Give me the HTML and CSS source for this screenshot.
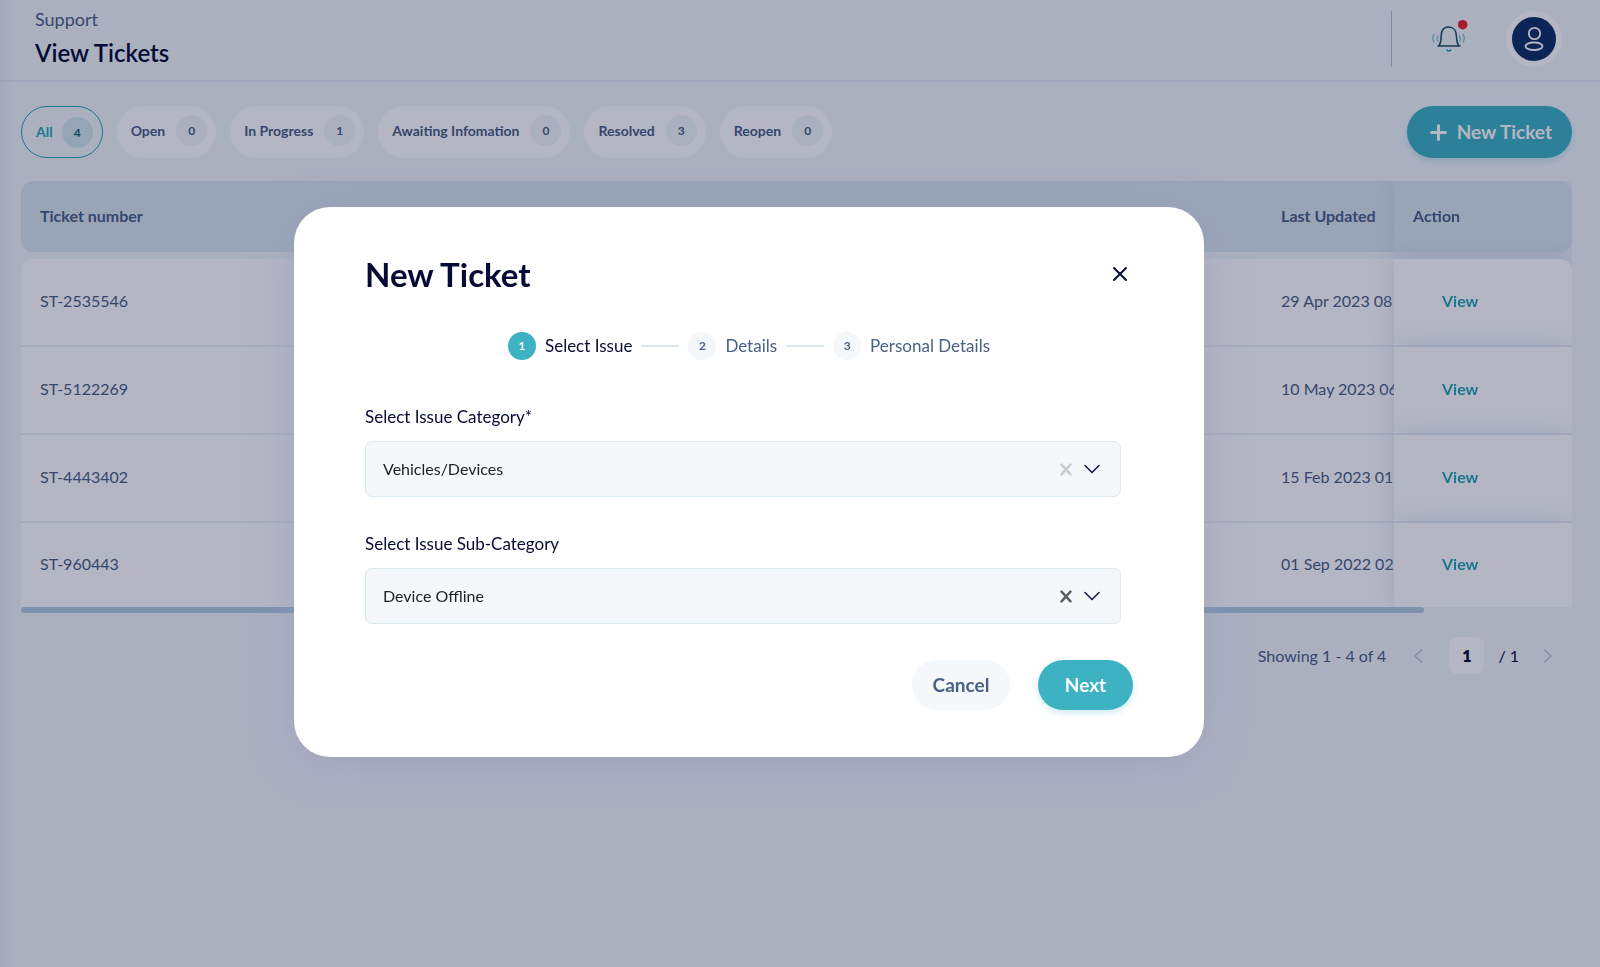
FILE: index.html
```html
<!DOCTYPE html>
<html lang="en">

<head>
  <meta charset="UTF-8" />
  <meta name="viewport" content="width=device-width, initial-scale=1.0" />
  <title>View Tickets</title>
  <link rel="stylesheet" href="styles.css">
</head>

<body>
  <header class="topbar">
    <div class="heading">
      <p class="section">Support</p>
      <h1 class="page-title">View Tickets</h1>
    </div>
    <div class="tools">
      <button class="bell" type="button" aria-label="Notifications">
        <svg width="36" height="34" viewBox="0 0 36 34" fill="none" stroke-linecap="round" stroke-linejoin="round">
          <path d="M8 26h22M9 26c1.500-2.500 2.200-5 2.200-10 0-5.500 2.700-9 7.500-9s7.700 3.500 7.700 9c0 5 .8 7.500 2.300 10" stroke="#1c4f63" stroke-width="1.500" />
          <path d="M17 30c1 1.200 2.800 1.200 3.800 0" stroke="#27a4b7" stroke-width="1.700" />
          <path d="M4 14.500c-1.800 2.500-1.800 5 0 7.500M8 16c-1 1.500-1 3.500 0 5M33 14.500c1.800 2.500 1.800 5 0 7.500M29.500 16c1 1.500 1 3.500 0 5" stroke="#8ac7d0" stroke-width="1.400" />
          <circle cx="32.700" cy="4.700" r="4.800" fill="#ee2126" />
        </svg>
      </button>
      <button class="avatar" type="button" aria-label="Account">
        <svg width="20" height="26" viewBox="0 0 20 26" fill="none" stroke="#fff" stroke-width="1.800">
          <circle cx="10.500" cy="7.500" r="5.700" />
          <rect x="1.500" y="16.500" width="17" height="7.500" rx="8" ry="3.750" />
        </svg>
      </button>
    </div>
  </header>

  <main class="content">
    <div class="toolbar">
      <div class="filters">
        <button class="pill active" type="button">All <span class="count">4</span></button>
        <button class="pill" type="button">Open <span class="count">0</span></button>
        <button class="pill" type="button">In Progress <span class="count">1</span></button>
        <button class="pill" type="button">Awaiting Infomation <span class="count">0</span></button>
        <button class="pill" type="button">Resolved <span class="count">3</span></button>
        <button class="pill" type="button">Reopen <span class="count">0</span></button>
      </div>
      <button class="new-ticket" type="button">
        <svg width="17" height="17" viewBox="0 0 17 17" stroke="#fff" stroke-width="3" stroke-linecap="round">
          <path d="M8.500 1.500v14M1.500 8.500h14" />
        </svg>
        New Ticket
      </button>
    </div>

    <div class="table-wrap">
      <table class="tickets">
        <thead>
          <tr>
            <th class="col-number">Ticket number</th>
            <th></th>
            <th class="col-date">Last Updated</th>
            <th class="col-action">Action</th>
          </tr>
        </thead>
        <tbody>
          <tr>
            <td>ST-2535546</td>
            <td></td>
            <td>29 Apr 2023 08</td>
            <td class="col-action"><a class="view" href="#">View</a></td>
          </tr>
          <tr>
            <td>ST-5122269</td>
            <td></td>
            <td>10 May 2023 06</td>
            <td class="col-action"><a class="view" href="#">View</a></td>
          </tr>
          <tr>
            <td>ST-4443402</td>
            <td></td>
            <td>15 Feb 2023 01:</td>
            <td class="col-action"><a class="view" href="#">View</a></td>
          </tr>
          <tr>
            <td>ST-960443</td>
            <td></td>
            <td>01 Sep 2022 02</td>
            <td class="col-action"><a class="view" href="#">View</a></td>
          </tr>
        </tbody>
      </table>
    </div>
    <div class="scroll-thumb"></div>

    <nav class="pagination" aria-label="Pages">
      <span class="showing">Showing 1 - 4 of 4</span>
      <button class="page-arrow" type="button" aria-label="Previous page">
        <svg width="9" height="14" viewBox="0 0 9 14" fill="none" stroke="#b3c8d8" stroke-width="1.500"><path d="M8 .5 1 7l7 6.500" /></svg>
      </button>
      <span class="page-current">1</span>
      <span class="page-total">/ 1</span>
      <button class="page-arrow" type="button" aria-label="Next page">
        <svg width="9" height="14" viewBox="0 0 9 14" fill="none" stroke="#b3c8d8" stroke-width="1.500"><path d="m1 .5 7 6.500-7 6.500" /></svg>
      </button>
    </nav>
  </main>

  <div class="overlay">
    <form class="modal" role="dialog" aria-labelledby="modal-title">
      <div class="modal-head">
        <h2 class="modal-title" id="modal-title">New Ticket</h2>
        <button class="close" type="button" aria-label="Close">
          <svg width="14" height="14" viewBox="0 0 14 14" stroke="#060b35" stroke-width="2" stroke-linecap="round"><path d="m1 1 12 12M13 1 1 13" /></svg>
        </button>
      </div>

      <ol class="steps">
        <li class="step current"><span class="step-num">1</span>Select Issue</li>
        <li class="step"><span class="step-num">2</span>Details</li>
        <li class="step"><span class="step-num">3</span>Personal Details</li>
      </ol>

      <div class="field">
        <label for="category">Select Issue Category*</label>
        <div class="select-box">
          <select id="category">
            <option>Vehicles/Devices</option>
          </select>
          <div class="indicators">
            <button class="clear" type="button" aria-label="Clear category">
              <svg width="12" height="13" viewBox="0 0 12 13" stroke="#ccc" stroke-width="2.500" stroke-linecap="round"><path d="m1.500 1.700 9 9.600M10.500 1.700l-9 9.600" /></svg>
            </button>
            <svg width="16" height="10" viewBox="0 0 16 10" fill="none" stroke="#0b1145" stroke-width="1.500" stroke-linecap="round"><path d="m1 1.500 7 7 7-7" /></svg>
          </div>
        </div>
      </div>

      <div class="field">
        <label for="subcategory">Select Issue Sub-Category</label>
        <div class="select-box">
          <select id="subcategory">
            <option>Device Offline</option>
          </select>
          <div class="indicators">
            <button class="clear" type="button" aria-label="Clear sub-category">
              <svg width="12" height="13" viewBox="0 0 12 13" stroke="#5f5f5f" stroke-width="2.500" stroke-linecap="round"><path d="m1.500 1.700 9 9.600M10.500 1.700l-9 9.600" /></svg>
            </button>
            <svg width="16" height="10" viewBox="0 0 16 10" fill="none" stroke="#0b1145" stroke-width="1.500" stroke-linecap="round"><path d="m1 1.500 7 7 7-7" /></svg>
          </div>
        </div>
      </div>

      <div class="actions">
        <button class="btn cancel" type="button">Cancel</button>
        <button class="btn next" type="submit">Next</button>
      </div>
    </form>
  </div>
</body>

</html>
```
FILE: styles.css
```css
* {
  margin: 0;
  padding: 0;
  box-sizing: border-box;
}

body {
  min-height: 100vh;
  font-family: Lato, "Open Sans", sans-serif;
  font-size: 16px;
  line-height: 20px;
  color: #4a6186;
  background: linear-gradient(to right, #e9eff4, #f2f7fa 18px);
}

button,
select {
  font: inherit;
  color: inherit;
  border: none;
  background: none;
  cursor: pointer;
}

svg {
  display: block;
  overflow: visible;
}

/* top bar */
.topbar {
  display: flex;
  justify-content: space-between;
  height: 82px;
  padding: 0 38px 0 35px;
  border-bottom: 2px solid #e1e9f1;
}

.heading {
  padding-top: 7px;
}

.section {
  font-size: 18px;
  line-height: 24px;
}

.page-title {
  margin-top: 7px;
  font-size: 24px;
  font-weight: 600;
  line-height: 30px;
  color: #060b35;
}

.tools {
  display: flex;
  align-items: center;
  gap: 40px;
  height: 56px;
  margin-top: 11px;
  padding-left: 38px;
  border-left: 1px solid #b4bed4;
}

.bell {
  margin-top: -4px;
}

.avatar {
  display: flex;
  align-items: center;
  justify-content: center;
  width: 56px;
  height: 56px;
  border: 6px solid #fff;
  border-radius: 50%;
  background: #0d3264;
}

/* filters */
.content {
  padding: 24px 28px 24px 21px;
}

.toolbar,
.filters,
.pill,
.new-ticket {
  display: flex;
  align-items: center;
}

.toolbar {
  justify-content: space-between;
}

.filters {
  gap: 14px;
}

.pill {
  gap: 11px;
  height: 52px;
  padding: 0 9px 3px 14px;
  border-radius: 26px;
  background: #fff;
  font-size: 14px;
  font-weight: 700;
}

.pill.active {
  gap: 9px;
  padding-bottom: 0;
  border: 1px solid #27a4b7;
  background: none;
  color: #27a4b7;
}

.count {
  width: 31px;
  height: 31px;
  border-radius: 50%;
  background: #f2f7fa;
  font-size: 12px;
  line-height: 31px;
  text-align: center;
}

.active .count {
  background: #d2e9eb;
  color: #106578;
}

.new-ticket {
  gap: 10px;
  height: 52px;
  padding: 0 20px 0 23px;
  border-radius: 26px;
  background: #3db2c3;
  box-shadow: 0 3px 6px rgba(61, 178, 195, 0.25);
  font-size: 19px;
  font-weight: 700;
  color: #fff;
}

/* table */
.table-wrap {
  margin-top: 23px;
  overflow: hidden;
}

.tickets {
  width: 110%;
  table-layout: fixed;
  border-collapse: separate;
  border-spacing: 0;
  white-space: nowrap;
}

.tickets th,
.tickets td {
  padding: 0 0 2px 19px;
  text-align: left;
}

.tickets th {
  height: 71px;
  background: #d9e6ee;
  font-weight: 700;
}

.tickets td {
  height: 88px;
  border-bottom: 2px solid #eef3f8;
  background: #fff;
}

.tickets tbody tr:last-child td {
  height: 84px;
  border-bottom: none;
}

.tickets tbody::before {
  content: "";
  display: block;
  height: 7px;
}

.tickets .col-number {
  width: 280px;
  border-radius: 12px 0 0 12px;
}

.tickets .col-date {
  width: 287px;
}

.tickets .col-action {
  position: sticky;
  right: 0;
  width: 178px;
  box-shadow: 0 0 24px rgba(160, 170, 205, 0.3);
}

.tickets th.col-action {
  border-radius: 0 12px 12px 0;
}

.tickets td.col-action {
  padding-left: 48px;
}

.tickets tbody tr:first-child td:first-child {
  border-top-left-radius: 12px;
}

.tickets tbody tr:first-child td:last-child {
  border-top-right-radius: 12px;
}

.view {
  font-weight: 700;
  color: #27a4b7;
  text-decoration: none;
}

.scroll-thumb {
  width: 1403px;
  max-width: 91%;
  height: 6px;
  border-radius: 3px;
  background: #b3cbdf;
}

.pagination {
  display: flex;
  align-items: center;
  justify-content: flex-end;
  margin-top: 24px;
  padding-right: 20px;
}

.page-arrow {
  margin: 0 26px 0 28px;
}

.page-arrow:last-child {
  margin: 0 0 0 24px;
}

.page-current {
  width: 35px;
  border-radius: 8px;
  background: #fff;
  font-weight: 800;
  line-height: 37px;
  text-align: center;
  color: #060b35;
}

.page-total {
  margin-left: 14px;
  color: #060b35;
}

.overlay {
  position: fixed;
  inset: 0;
  display: flex;
  align-items: center;
  justify-content: center;
  padding: 0 102px 3px 0;
  background: rgba(8, 12, 55, 0.3);
}

.modal {
  width: 910px;
  padding: 47px 71px;
  border-radius: 36px;
  background: #fff;
  box-shadow: 0 6px 42px rgba(150, 150, 190, 0.5);
}

.modal-head {
  display: flex;
  align-items: center;
  justify-content: space-between;
  padding-right: 6px;
}

.modal-title {
  font-size: 33px;
  font-weight: 700;
  line-height: 40px;
  color: #060b35;
}

.steps {
  display: flex;
  justify-content: center;
  margin: 38px 0 47px;
  font-size: 17px;
  list-style: none;
}

.step {
  display: flex;
  align-items: center;
  gap: 9px;
}

.step:not(:last-child)::after {
  content: "";
  width: 38px;
  height: 2px;
  margin-right: 9px;
  background: #dce8f1;
}

.step-num {
  width: 28px;
  border-radius: 50%;
  background: #f4f8fb;
  font-size: 12px;
  font-weight: 700;
  line-height: 28px;
  text-align: center;
}

.step.current {
  color: #060b35;
}

.current .step-num {
  background: #3db2c3;
  color: #fff;
}

.field {
  margin-right: 12px;
}

.field + .field {
  margin-top: 37px;
}

.field label {
  display: block;
  margin-bottom: 14px;
  font-size: 17px;
  color: #060b35;
}

.select-box {
  position: relative;
}

.select-box select {
  display: block;
  width: 100%;
  height: 56px;
  padding: 0 80px 0 17px;
  border: 1px solid #dce9f1;
  border-radius: 7px;
  background: #f4f8fb;
  color: #222;
  appearance: none;
}

.indicators {
  position: absolute;
  top: 0;
  right: 21px;
  display: flex;
  align-items: center;
  gap: 12px;
  height: 100%;
}

.actions {
  display: flex;
  justify-content: flex-end;
  gap: 28px;
  margin-top: 36px;
}

.btn {
  height: 50px;
  border-radius: 25px;
  font-size: 19px;
  font-weight: 700;
}

.cancel {
  width: 98px;
  background: #f4f8fb;
}

.next {
  width: 95px;
  background: #3db2c3;
  box-shadow: 0 3px 6px rgba(61, 178, 195, 0.25);
  color: #fff;
}
```
